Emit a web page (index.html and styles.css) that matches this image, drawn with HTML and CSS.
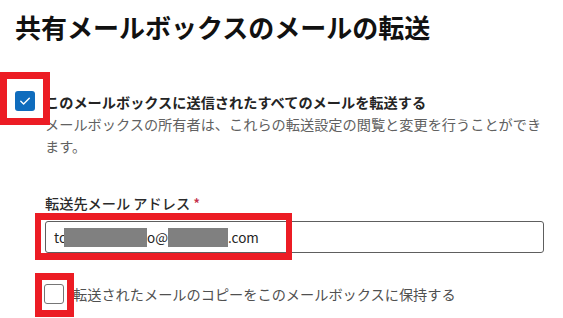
FILE: index.html
```html
<!DOCTYPE html>
<html lang="ja">
<head>
    <meta charset="UTF-8">
    <meta name="viewport" content="width=device-width, initial-scale=1.0">
    <title>共有メールボックスのメールの転送</title>
    <link rel="stylesheet" href="styles.css">
</head>
<body>
<div class="page">
    <h1 class="title">共有メールボックスのメールの転送</h1>

    <!-- 転送を有効にする -->
    <div class="check-row">
        <span class="checkbox checked">
            <svg width="20" height="20" viewBox="0 0 20 20"><path d="M5.8 10.3 L8.6 13 L14.3 7.3" fill="none" stroke="#fff" stroke-width="1.4" stroke-linecap="round" stroke-linejoin="round"/></svg>
        </span>
        <div class="check-text">
            <div class="check-label">このメールボックスに送信されたすべてのメールを転送する</div>
            <div class="check-desc">メールボックスの所有者は、これらの転送設定の閲覧と変更を行うことができます。</div>
        </div>
    </div>

    <!-- 転送先 -->
    <div class="field">
        <label class="field-label">転送先メール アドレス <span class="required">*</span></label>
        <div class="input">to<span class="redact redact-1"></span>o@<span class="redact redact-2"></span>.com</div>
    </div>

    <!-- コピーを保持 -->
    <div class="check-row check-row-sub">
        <span class="checkbox"></span>
        <div class="check-text">
            <div class="check-plain">転送されたメールのコピーをこのメールボックスに保持する</div>
        </div>
    </div>

    <!-- 注釈の赤枠 -->
    <span class="mark mark-1"></span>
    <span class="mark mark-2"></span>
    <span class="mark mark-3"></span>
</div>
</body>
</html>
```

FILE: styles.css
```css
body {
    margin: 0;
    background-color: #fff;
    font-family: "Noto Sans CJK JP", "Noto Sans", sans-serif;
    color: #242424;
}
.page {
    position: relative;
    width: 563px;
    height: 318px;
    padding: 11px 0 0 15px;
    box-sizing: border-box;
    overflow: hidden;
}
.title {
    margin: 0;
    font-size: 26px;
    line-height: 32px;
    font-weight: 700;
    color: #111;
}
.check-row {
    display: flex;
    align-items: flex-start;
    gap: 10px;
    margin-top: 48px;
}
.checkbox {
    flex: none;
    width: 20px;
    height: 20px;
    box-sizing: border-box;
    border: 1px solid #767676;
    border-radius: 3px;
    background: #fff;
}
.checkbox.checked {
    border: none;
    background: #0f6cbd;
}
.checkbox svg {
    display: block;
}
.check-text {
    width: 500px;
    font-size: 14.2px;
    line-height: 22px;
}
.check-label {
    font-weight: 700;
    color: #242424;
}
.check-desc {
    color: #616161;
}
.field {
    margin: 36px 0 0 30px;
    width: 499px;
}
.field-label {
    display: block;
    font-size: 14.2px;
    line-height: 20px;
    font-weight: 500;
    color: #2b2b2b;
}
.required {
    color: #c4314b;
}
.input {
    display: flex;
    align-items: center;
    height: 32px;
    margin-top: 8px;
    padding-left: 8px;
    box-sizing: border-box;
    border: 1px solid #5e5e5e;
    border-radius: 3px;
    font-size: 13.5px;
    color: #242424;
}
.redact {
    display: inline-block;
    height: 19px;
    background: #808080;
}
.redact-1 {
    width: 83px;
    margin-left: -3px;
}
.redact-2 {
    width: 60px;
}
.check-row-sub {
    margin: 31px 0 0 29px;
    gap: 9px;
}
.check-plain {
    color: #505050;
    line-height: 20px;
}
.mark {
    position: absolute;
    box-sizing: border-box;
    border: 7px solid #ec1c24;
}
.mark-1 {
    left: 0;
    top: 72px;
    width: 50px;
    height: 53px;
}
.mark-2 {
    left: 35px;
    top: 213px;
    width: 257px;
    height: 47px;
    border-width: 7px 6px;
}
.mark-3 {
    left: 35px;
    top: 273px;
    width: 39px;
    height: 44px;
}
```
